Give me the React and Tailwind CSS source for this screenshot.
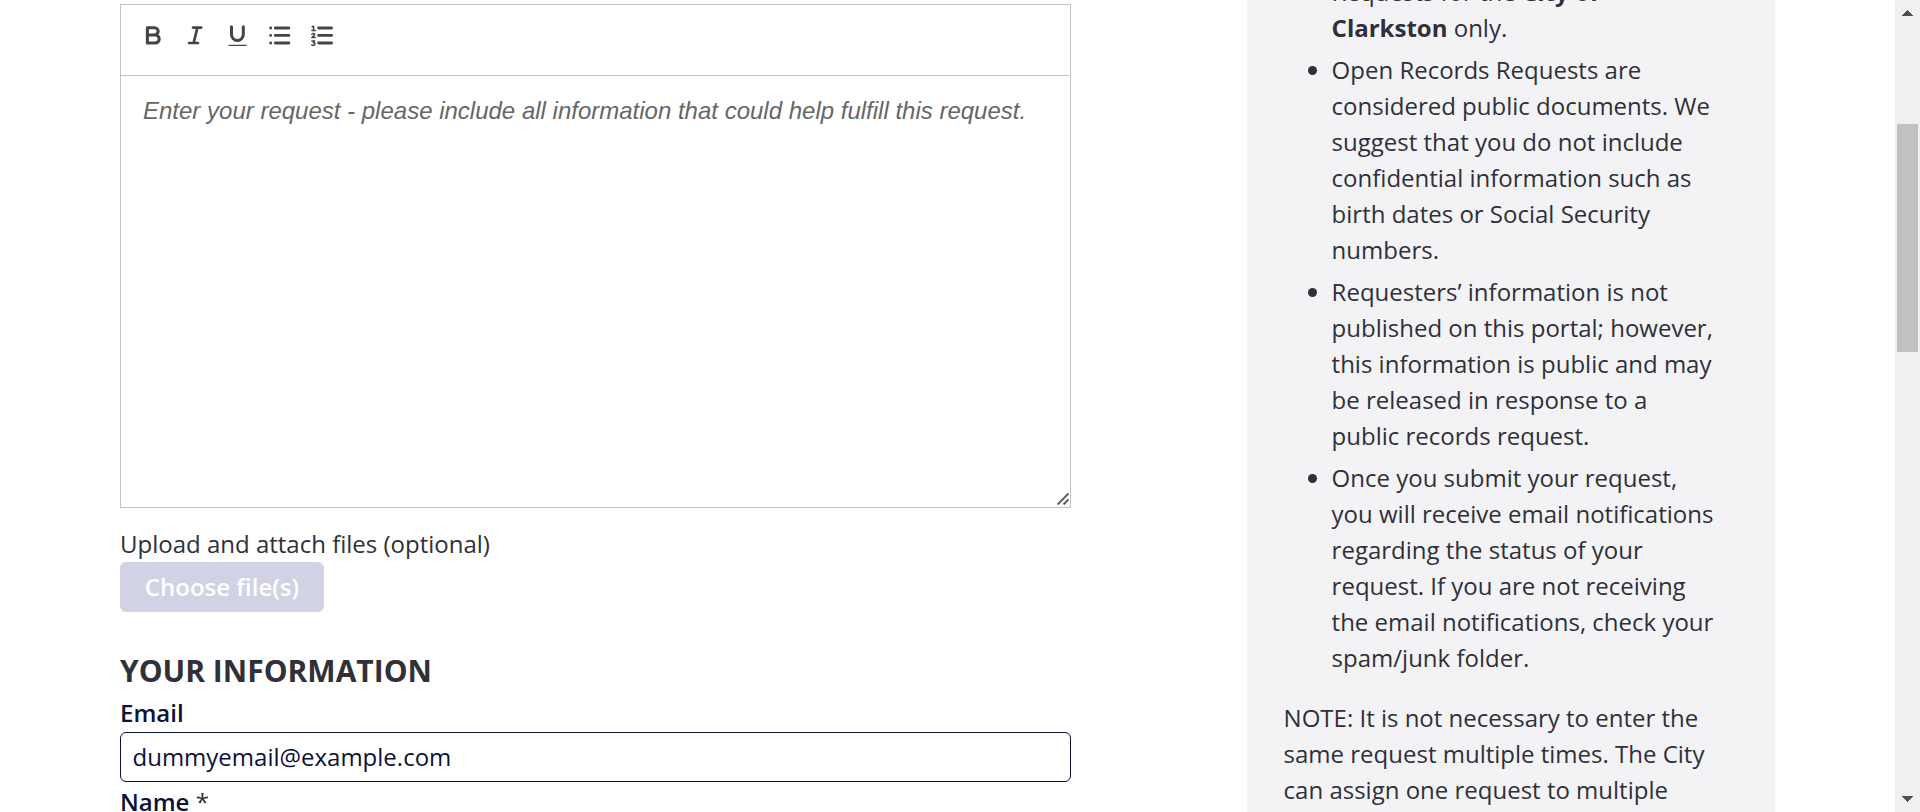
const tools = [
  {
    label: 'Bold',
    art: (
      <path d="M2.4 1.7v15.3h7.8a4 4 0 0 0 0-8H2.5h7a3.65 3.65 0 0 0 0-7.3z" strokeWidth="3.1" />
    ),
  },
  {
    label: 'Italic',
    art: <path d="M6 1.6h8.2M2.1 17h8.8M10.4 1.6 6.6 17" strokeWidth="2.7" />,
  },
  {
    label: 'Underline',
    art: (
      <>
        <path d="M2.5.8v7.8a5.9 5.9 0 0 0 11.8 0V.8" strokeWidth="3" />
        <path d="M.2 19.4h16.6" strokeWidth="1.4" />
      </>
    ),
  },
  {
    label: 'Bulleted List',
    art: (
      <>
        <path d="M4.3 2h13.6M4.3 9.4h13.6M4.3 17h13.6" strokeWidth="2.8" />
        <path d="M-.4 2h.1M-.4 9.4h.1M-.4 17h.1" strokeWidth="2.8" />
      </>
    ),
  },
  {
    label: 'Numbered List',
    art: (
      <>
        <path d="M5.6 2h13M5.6 9.4h13M5.6 17h13" strokeWidth="2.8" />
        <path
          d="M-.8.8.6.2v4.3M-1.1 4.5h3.4M-1.1 8.1c.8-1 2.9-.9 2.8.3 0 .9-1.4 1.6-2.8 3.2h3.2M-1.1 15h2.8L.3 16.7c2.2 0 2.2 2.7-.1 2.7-.6 0-1-.2-1.4-.5"
          strokeWidth="1.5"
        />
      </>
    ),
  },
];

function Toolbar() {
  return (
    <div className="flex h-[71px] items-start border-b border-[#c4c4c4] pt-[21px] pl-6">
      {tools.map((t) => (
        <button key={t.label} aria-label={t.label} className="w-[42px]">
          <svg
            viewBox="0 0 22 22"
            className="block h-[22px] w-[22px] overflow-visible"
            fill="none"
            stroke="#444"
            strokeLinecap="round"
            strokeLinejoin="round"
          >
            {t.art}
          </svg>
        </button>
      ))}
    </div>
  );
}

function RequestForm() {
  return (
    <main className="ml-[120px] w-[951px] shrink-0 pt-1">
      <div className="flex h-[504px] flex-col border border-[#c4c4c4]">
        <Toolbar />
        <div className="flex grow flex-col justify-between">
          <p className="pt-[18px] pl-[22px] font-['Liberation_Sans',Arial,sans-serif] text-[24px] leading-[34px] whitespace-nowrap text-[#666] italic">
            Enter your request - please include all information that could help fulfill this request.
          </p>
          <svg viewBox="0 0 12 12" className="mr-px mb-[2px] h-3 w-3 self-end" stroke="#555" strokeWidth="1.9" fill="none">
            <path d="M.5 11.5 11.5.5M6.5 11.5l5-5" />
          </svg>
        </div>
      </div>
      <div className="mt-[18px] h-9 text-[24px] leading-9">Upload and attach files (optional)</div>
      <button className="block h-[50px] w-[204px] rounded-[6px] bg-[#d1d3e5] text-[24px] leading-[50px] font-semibold text-white">
        Choose file(s)
      </button>
      <h2 className="mt-[35px] h-[48px] text-[30px] leading-[48px] font-bold whitespace-nowrap">YOUR INFORMATION</h2>
      <label className="mb-px block h-9 text-[24px] leading-9 font-semibold text-[#0c1139]">Email</label>
      <input
        className="block h-[50px] w-full rounded-[6px] border border-[#0c1139] bg-white px-[11.5px] pb-0.5 text-[24px] text-[#0c1139] outline-none"
        defaultValue="dummyemail@example.com"
      />
      <label className="mt-0.5 block text-[24px] leading-9 font-semibold text-[#0c1139]">
        Name <span className="font-normal text-[#2f3038]">*</span>
      </label>
    </main>
  );
}

function Sidebar() {
  return (
    <aside className="ml-[176px] w-[528px] shrink-0 bg-[#f3f3f6] pr-14 pl-[36.6px] text-[24px] leading-9">
      <ul className="-mt-[26px] list-disc space-y-[6px] pl-12">
        <li>
          Requests for the <b className="font-bold">City of Clarkston</b> only.
        </li>
        <li>
          Open Records Requests are considered public documents. We suggest that you do not include confidential
          information such as birth dates or Social Security numbers.
        </li>
        <li>
          Requesters’ information is not published on this portal; however, this information is public and may be
          released in response to a public records request.
        </li>
        <li>
          Once you submit your request, you will receive email notifications regarding the status of your request. If
          you are not receiving the email notifications, check your spam/junk folder.
        </li>
      </ul>
      <p className="mt-6">
        NOTE: It is not necessary to enter the same request multiple times. The City can assign one request to multiple
      </p>
    </aside>
  );
}

function Scrollbar() {
  return (
    <div className="ml-auto flex w-[25px] shrink-0 flex-col items-center bg-[#f0f0f0]">
      <svg viewBox="0 0 11 6" className="mt-[10px] h-[6px] w-[11px]" fill="#505050" shapeRendering="crispEdges">
        <path d="M5.5 0 11 6H0z" />
      </svg>
      <div className="mt-[108px] mr-0.5 ml-0.5 h-[228px] w-[21px] bg-[#c1c1c1]" />
      <svg viewBox="0 0 11 6" className="mt-auto mb-[10px] h-[6px] w-[11px]" fill="#505050" shapeRendering="crispEdges">
        <path d="M5.5 6 11 0H0z" />
      </svg>
    </div>
  );
}

export default function App() {
  return (
    <div className="flex h-[812px] w-[1920px] overflow-hidden bg-white font-['Open_Sans',sans-serif] text-[#2f3038]">
      <RequestForm />
      <Sidebar />
      <Scrollbar />
    </div>
  );
}
